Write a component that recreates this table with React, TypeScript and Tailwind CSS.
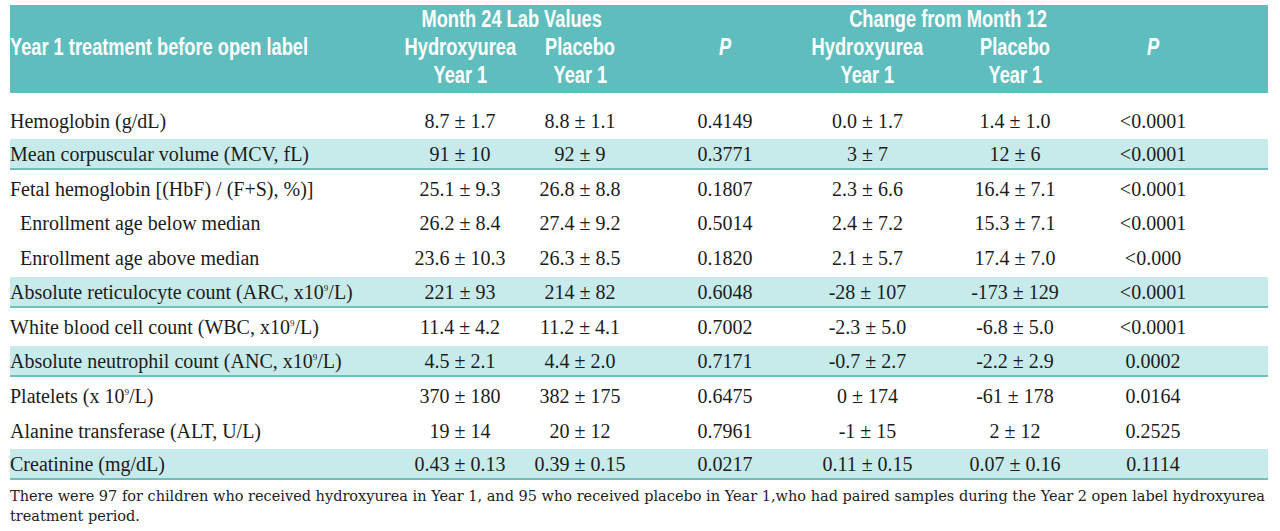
import React from 'react';

// Month 24 lab values table with teal header band
const GRID = 'grid grid-cols-[390px_120px_120px_170px_115px_180px_96px_1fr]';
const HEAD = "font-['Liberation_Sans',Arial,sans-serif] font-bold text-white text-[24px] leading-[28px]";

type Row = {
  label: React.ReactNode;
  vals: string[];
  shaded?: boolean;
  indent?: boolean;
  h: string;
};

const Sup = ({ children }: { children: React.ReactNode }) => (
  <span className="text-[9px] relative -top-[8px] leading-none">{children}</span>
);

// condensed header text: narrow the bold sans horizontally
const Cond = ({ children, left }: { children: React.ReactNode; left?: boolean }) => (
  <span className={`inline-block whitespace-nowrap scale-x-[0.76] ${left ? 'origin-left' : 'origin-center'}`}>
    {children}
  </span>
);

const HCell = ({ children, className = '' }: { children: React.ReactNode; className?: string }) => (
  <div className={`flex justify-center ${className}`}>
    <Cond>{children}</Cond>
  </div>
);

const rows: Row[] = [
  { label: 'Hemoglobin (g/dL)', vals: ['8.7 ± 1.7', '8.8 ± 1.1', '0.4149', '0.0 ± 1.7', '1.4 ± 1.0', '<0.0001'], h: 'h-[34px]' },
  { label: 'Mean corpuscular volume (MCV, fL)', vals: ['91 ± 10', '92 ± 9', '0.3771', '3 ± 7', '12 ± 6', '<0.0001'], shaded: true, h: 'h-[34px]' },
  { label: 'Fetal hemoglobin [(HbF) / (F+S), %)]', vals: ['25.1 ± 9.3', '26.8 ± 8.8', '0.1807', '2.3 ± 6.6', '16.4 ± 7.1', '<0.0001'], h: 'h-[34px]' },
  { label: 'Enrollment age below median', vals: ['26.2 ± 8.4', '27.4 ± 9.2', '0.5014', '2.4 ± 7.2', '15.3 ± 7.1', '<0.0001'], indent: true, h: 'h-[34px]' },
  { label: 'Enrollment age above median', vals: ['23.6 ± 10.3', '26.3 ± 8.5', '0.1820', '2.1 ± 5.7', '17.4 ± 7.0', '<0.000'], indent: true, h: 'h-[35px]' },
  { label: <>Absolute reticulocyte count (ARC, x10<Sup>9</Sup>/L)</>, vals: ['221 ± 93', '214 ± 82', '0.6048', '-28 ± 107', '-173 ± 129', '<0.0001'], shaded: true, h: 'h-[35px]' },
  { label: <>White blood cell count (WBC, x10<Sup>9</Sup>/L)</>, vals: ['11.4 ± 4.2', '11.2 ± 4.1', '0.7002', '-2.3 ± 5.0', '-6.8 ± 5.0', '<0.0001'], h: 'h-[34px]' },
  { label: <>Absolute neutrophil count (ANC, x10<Sup>9</Sup>/L)</>, vals: ['4.5 ± 2.1', '4.4 ± 2.0', '0.7171', '-0.7 ± 2.7', '-2.2 ± 2.9', '0.0002'], shaded: true, h: 'h-[35px]' },
  { label: <>Platelets (x 10<Sup>9</Sup>/L)</>, vals: ['370 ± 180', '382 ± 175', '0.6475', '0 ± 174', '-61 ± 178', '0.0164'], h: 'h-[34px]' },
  { label: 'Alanine transferase (ALT, U/L)', vals: ['19 ± 14', '20 ± 12', '0.7961', '-1 ± 15', '2 ± 12', '0.2525'], h: 'h-[35px]' },
  { label: 'Creatinine (mg/dL)', vals: ['0.43 ± 0.13', '0.39 ± 0.15', '0.0217', '0.11 ± 0.15', '0.07 ± 0.16', '0.1114'], shaded: true, h: 'h-[34px]' },
];

export default function App() {
  return (
    <div className="w-[1280px] h-[531px] bg-white overflow-hidden pt-[5px] pl-[10px] pr-[12px]">
      {/* Header band */}
      <div className={`${GRID} ${HEAD} bg-[#5fbebd] pb-[4px]`}>
        <HCell className="col-start-2 col-span-2 row-start-1 pr-[16px]">Month 24 Lab Values</HCell>
        <HCell className="col-start-5 col-span-2 row-start-1 pr-[18px]">Change from Month 12</HCell>

        <div className="col-start-1 row-start-2">
          <Cond left>Year 1 treatment before open label</Cond>
        </div>
        <HCell className="col-start-2 row-start-2">Hydroxyurea</HCell>
        <HCell className="col-start-3 row-start-2">Placebo</HCell>
        <HCell className="col-start-4 row-start-2 italic">P</HCell>
        <HCell className="col-start-5 row-start-2">Hydroxyurea</HCell>
        <HCell className="col-start-6 row-start-2">Placebo</HCell>
        <HCell className="col-start-7 row-start-2 italic">P</HCell>

        <HCell className="col-start-2 row-start-3">Year 1</HCell>
        <HCell className="col-start-3 row-start-3">Year 1</HCell>
        <HCell className="col-start-5 row-start-3">Year 1</HCell>
        <HCell className="col-start-6 row-start-3">Year 1</HCell>
      </div>

      {/* Body rows */}
      <div className="mt-[9px] font-['Liberation_Serif',serif] text-[20px] text-[#1c1c1c]">
        {rows.map((r, i) => (
          <div key={i} className={`${r.h} flex flex-col justify-end`}>
            <div
              className={`${GRID} h-[31px] items-center leading-none ${
                r.shaded ? 'bg-[#c7eaea] border-b-2 border-[#6fbfbd]' : ''
              }`}
            >
              <div className={`whitespace-nowrap ${r.indent ? 'pl-[10px]' : ''}`}>{r.label}</div>
              {r.vals.map((v, j) => (
                <div key={j} className="text-center whitespace-nowrap">
                  {v}
                </div>
              ))}
            </div>
          </div>
        ))}
      </div>

      {/* Footnote */}
      <div className="mt-[6px] font-['DejaVu_Serif',serif] text-[14.5px] leading-[20px] text-[#222] whitespace-nowrap">
        There were 97 for children who received hydroxyurea in Year 1, and 95 who received placebo in Year 1,who had paired samples during the Year 2 open label hydroxyurea
        <br />
        treatment period.
      </div>
    </div>
  );
}
